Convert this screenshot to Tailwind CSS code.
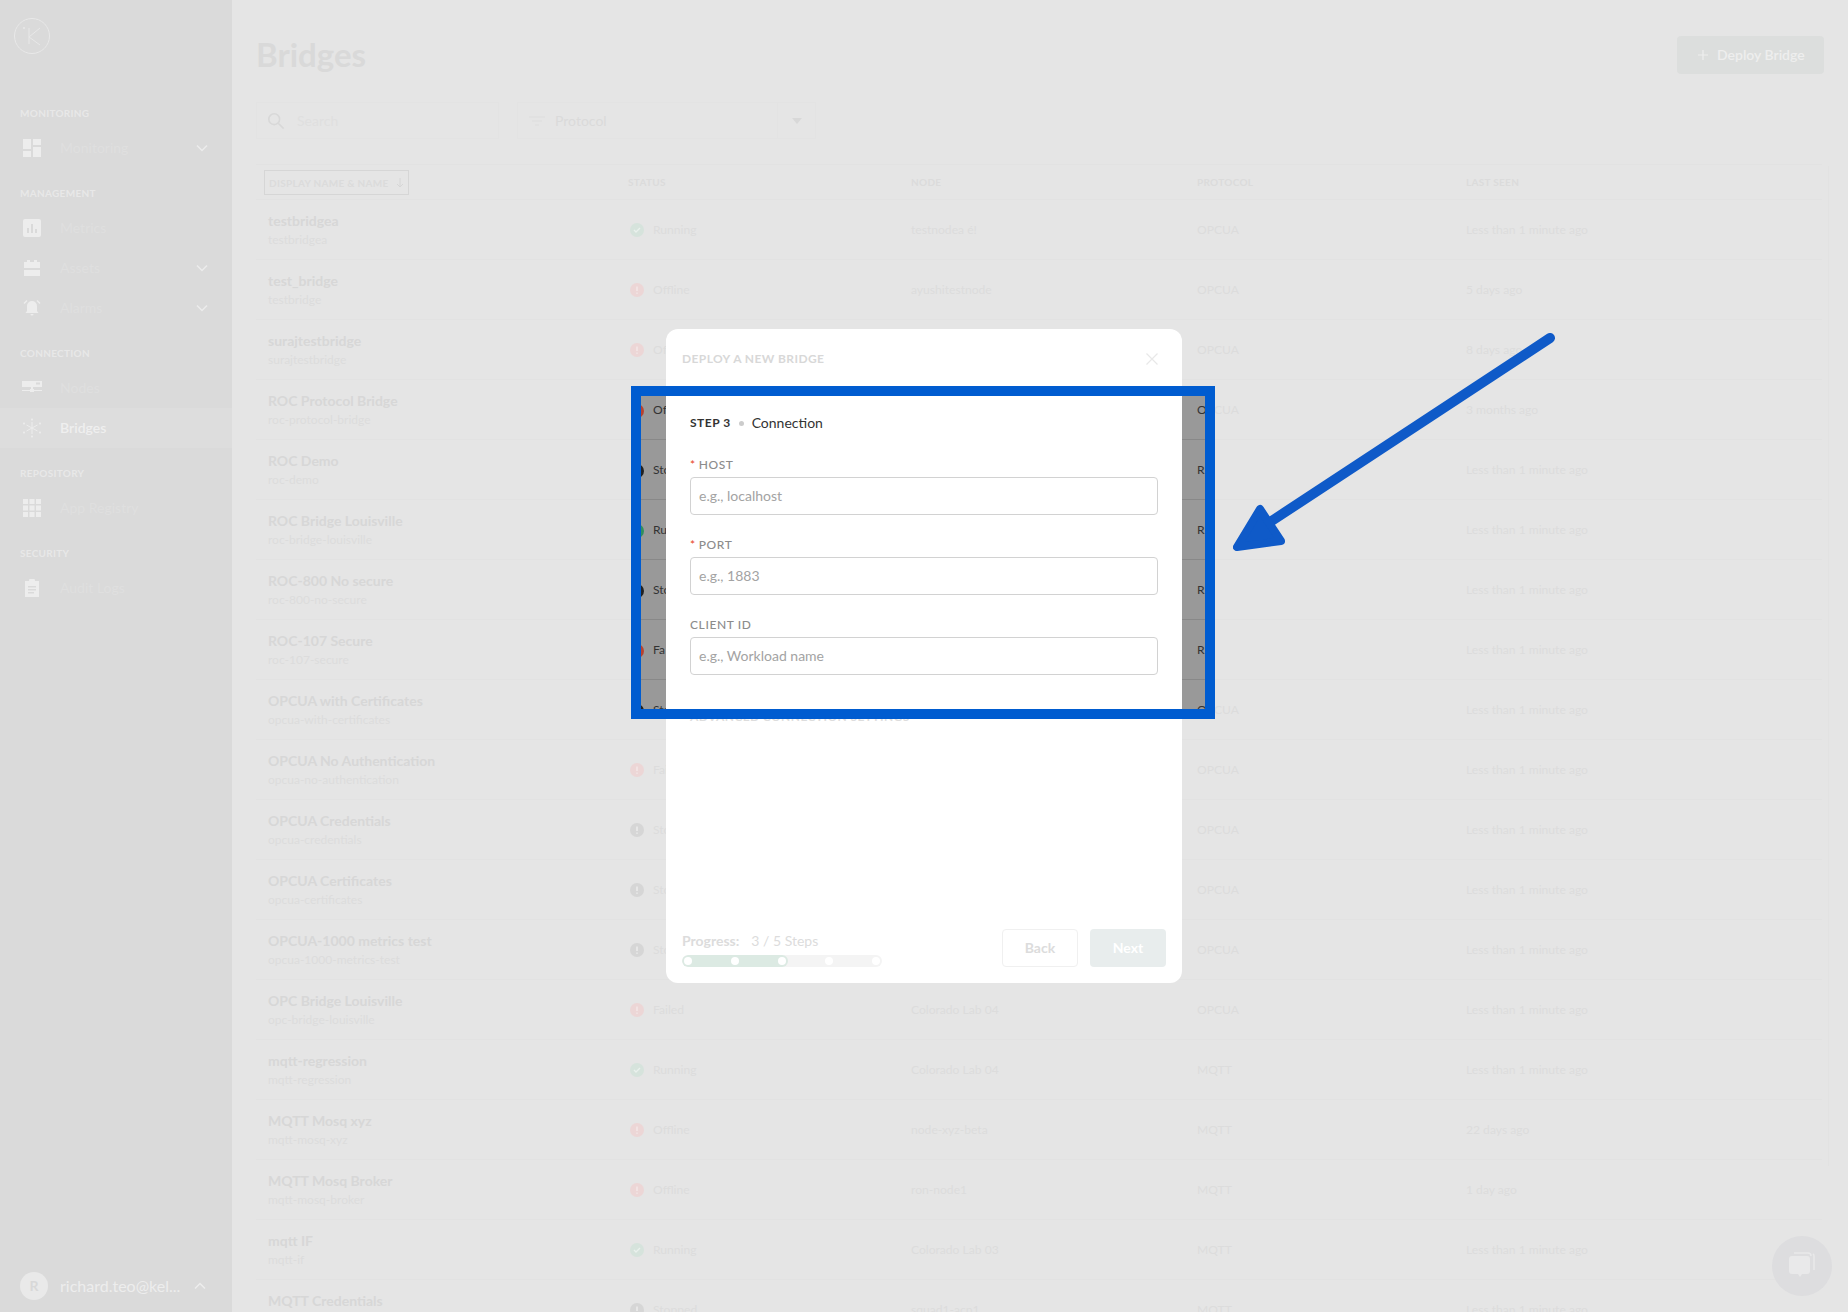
<!DOCTYPE html>
<html><head><meta charset="utf-8"><script src="https://cdn.jsdelivr.net/npm/@tailwindcss/browser@4"></script></head>
<body class="m-0 overflow-hidden">
<div class="relative w-[1848px] h-[1312px] overflow-hidden bg-[#e5e5e5] font-['Lato',sans-serif] flex">

<aside class="w-[232px] h-full bg-[#dadada] flex flex-col shrink-0">
  <div class="h-[103px] pl-[14px] pt-[18px] shrink-0">
    <svg width="36" height="36" viewBox="0 0 36 36" fill="none" stroke="#e8e8e8"><circle cx="18" cy="18" r="17.500"/><path d="M15 10v16M26 10l-11 9 11 8"/><circle cx="10" cy="10" r=".7" fill="#e8e8e8"/></svg>
  </div>
  <div class="flex flex-col gap-[15px] text-[#dfdfdf] text-sm">
    <section><h3 class="h-5 leading-5 pl-5 mb-[5px] text-[10px] font-bold tracking-[0.3px] text-[#e8e8e8]">MONITORING</h3>
      <div class="h-10 flex items-center"><span class="w-16 -mr-1 flex justify-center"><svg width="18" height="18" viewBox="0 0 18 18" fill="#ededed"><path d="M0 0h8v10H0zM10 0h8v6h-8zM10 8h8v10h-8zM0 12h8v6H0z"/></svg></span><span class="flex-1">Monitoring</span><svg class="mr-6" width="12" height="8" viewBox="0 0 12 8" fill="none" stroke="#ececec" stroke-width="1.500"><path d="M1 1.500l5 5 5-5"/></svg></div></section>
    <section><h3 class="h-5 leading-5 pl-5 mb-[5px] text-[10px] font-bold tracking-[0.3px] text-[#e8e8e8]">MANAGEMENT</h3>
      <div class="h-10 flex items-center"><span class="w-16 -mr-1 flex justify-center"><svg width="18" height="18" viewBox="0 0 18 18"><rect width="18" height="18" rx="2" fill="#ededed"/><path d="M4 9h2v5H4zM8 5h2v9H8zM12 10h2v4h-2z" fill="#dadada"/></svg></span><span class="flex-1">Metrics</span></div>
      <div class="h-10 flex items-center"><span class="w-16 -mr-1 flex justify-center"><svg width="18" height="18" viewBox="0 0 18 18" fill="#ededed"><path d="M1 3h3V1h3v2h4V1h3v2h3v6H1zM1 11h16v6H1z"/></svg></span><span class="flex-1">Assets</span><svg class="mr-6" width="12" height="8" viewBox="0 0 12 8" fill="none" stroke="#ececec" stroke-width="1.500"><path d="M1 1.500l5 5 5-5"/></svg></div>
      <div class="h-10 flex items-center"><span class="w-16 -mr-1 flex justify-center"><svg width="18" height="18" viewBox="0 0 18 18" fill="#ededed"><path d="M9 2a5 5 0 0 0-5 5v5l-1.500 2h13L14 12V7a5 5 0 0 0-5-5zM7.500 15h3a1.500 1.500 0 0 1-3 0zM3.500 1L0.500 4l1 1 3-3zM14.500 1l3 3-1 1-3-3z"/></svg></span><span class="flex-1">Alarms</span><svg class="mr-6" width="12" height="8" viewBox="0 0 12 8" fill="none" stroke="#ececec" stroke-width="1.500"><path d="M1 1.500l5 5 5-5"/></svg></div></section>
    <section><h3 class="h-5 leading-5 pl-5 mb-[5px] text-[10px] font-bold tracking-[0.3px] text-[#e8e8e8]">CONNECTION</h3>
      <div class="h-10 flex items-center"><span class="w-16 -mr-1 flex justify-center"><svg width="20" height="14" viewBox="0 0 20 14" fill="#ededed"><path d="M0 0h20v6H0zM0 9h8v1H0zM12 9h8v1h-8zM9 6h2v2h1v3H8V8h1z"/><rect x="14" y="1.500" width="4" height="2" fill="#dadada"/></svg></span><span>Nodes</span></div>
      <div class="h-10 flex items-center bg-[#dddddd] text-[#efefef] font-semibold"><span class="w-16 -mr-1 flex justify-center"><svg width="20" height="20" viewBox="0 0 20 20" fill="none" stroke="#ededed"><path d="M10 4v12M4.500 7l11 6M15.500 7l-11 6"/><g fill="#ededed" stroke="none"><circle cx="10" cy="1.500" r="1"/><circle cx="10" cy="18.500" r="1"/><circle cx="2" cy="5.500" r="1"/><circle cx="18" cy="5.500" r="1"/><circle cx="2" cy="14.500" r="1"/><circle cx="18" cy="14.500" r="1"/></g></svg></span><span>Bridges</span></div></section>
    <section><h3 class="h-5 leading-5 pl-5 mb-[5px] text-[10px] font-bold tracking-[0.3px] text-[#e8e8e8]">REPOSITORY</h3>
      <div class="h-10 flex items-center"><span class="w-16 -mr-1 flex justify-center"><svg width="18" height="18" viewBox="0 0 18 18" fill="#ededed"><path d="M0 0h5v5H0zM6.500 0h5v5h-5zM13 0h5v5h-5zM0 6.500h5v5H0zM6.500 6.500h5v5h-5zM13 6.500h5v5h-5zM0 13h5v5H0zM6.500 13h5v5h-5zM13 13h5v5h-5z"/></svg></span><span>App Registry</span></div></section>
    <section><h3 class="h-5 leading-5 pl-5 mb-[5px] text-[10px] font-bold tracking-[0.3px] text-[#e8e8e8]">SECURITY</h3>
      <div class="h-10 flex items-center"><span class="w-16 -mr-1 flex justify-center"><svg width="16" height="18" viewBox="0 0 16 18" fill="#ededed"><path fill-rule="evenodd" d="M1 2h4a3 3 0 0 1 6 0h4v16H1zM4 7v1.500h8V7zM4 10v1.500h8V10zM4 13v1.500h6V13z"/></svg></span><span>Audit Logs</span></div></section>
  </div>
  <div class="mt-auto h-[52px] flex items-center pl-5 text-[#ededed]">
    <span class="w-7 h-7 rounded-full bg-[#e9e9e9] text-[#d8d8d8] flex items-center justify-center text-sm font-bold mr-3">R</span>
    <span class="text-base w-[122px] whitespace-nowrap">richard.teo@kel...</span>
    <svg class="ml-3" width="12" height="8" viewBox="0 0 12 8" fill="none" stroke="#ededed" stroke-width="1.500"><path d="M1 6.500l5-5 5 5"/></svg>
  </div>
</aside>

<main class="flex-1 h-full pl-6 flex flex-col overflow-hidden">
  <header class="h-[102px] w-[1568px] flex justify-between shrink-0 pt-9">
    <h1 class="text-[33px] leading-[38px] -mt-px font-bold text-[#d9d9d9]">Bridges</h1>
    <button class="w-[147px] h-[38px] bg-[#dcdedd] rounded-sm text-[#eeeeee] text-sm font-semibold flex items-center pl-5 gap-2"><svg width="12" height="12" viewBox="0 0 12 12" stroke="#eeeeee" stroke-width="1.200"><path d="M6 1v10M1 6h10"/></svg>Deploy Bridge</button>
  </header>
  <div class="flex items-center h-[37px] shrink-0 text-sm text-[#dadada]">
    <div class="w-[243px] h-full border border-[#e3e3e3] flex items-center pl-[10px] gap-[12px]"><svg width="18" height="18" viewBox="0 0 20 20" fill="none" stroke="#d8d8d8" stroke-width="1.800"><circle cx="8" cy="8" r="6"/><path d="M12.500 12.500l6 6"/></svg><span class="text-[#dfdfdf]">Search</span></div>
    <div class="ml-[18px] w-[299px] h-full border border-[#e3e3e3] flex items-center pl-[11px]"><svg class="mr-[10px]" width="16" height="12" viewBox="0 0 16 12" stroke="#dedede" stroke-width="1.200"><path d="M0 2h16M3 6h10M6 10h4"/></svg><span class="flex-1">Protocol</span><span class="w-[38px] h-full border-l border-[#e3e3e3] flex items-center justify-center"><svg width="10" height="6" viewBox="0 0 10 6" fill="#d8d8d8"><path d="M0 0h10L5 6z"/></svg></span></div>
  </div>
  <div class="relative mt-[25px] w-[1566px] shrink-0 h-[36px] border-y border-[#e2e2e2] text-[10px] leading-[14px] font-bold tracking-[0.3px] text-[#dbdbdb] whitespace-nowrap">
    <div class="absolute left-[8px] top-[5px] w-[145px] h-[25px] border border-[#d6d6d6] flex items-center pl-1 gap-[7px]">DISPLAY NAME &amp; NAME<svg width="8" height="10" viewBox="0 0 8 10" fill="none" stroke="#d6d6d6"><path d="M4 0v9M1 6l3 3 3-3"/></svg></div>
    <span class="absolute left-[372px] top-[10px]">STATUS</span>
    <span class="absolute left-[655px] top-[10px]">NODE</span>
    <span class="absolute left-[941px] top-[10px]">PROTOCOL</span>
    <span class="absolute left-[1210px] top-[10px]">LAST SEEN</span>
  </div>
  <div class="w-[1566px] shrink-0 text-[#dcdcdc] text-[12.100px] [&>div]:h-[60px] [&>div]:pt-[2px] [&>div]:border-b [&>div]:border-[#e2e2e2] [&>div]:grid [&>div]:grid-cols-[374px_281px_286px_269px_1fr] [&>div]:items-center whitespace-nowrap">
    <div><div class="pl-3 pb-px"><div class="text-sm font-bold leading-5 text-[#d7d7d7]">testbridgea</div><div class="text-xs leading-[18px]">testbridgea</div></div><div class="flex items-center gap-[9px]"><svg width="14" height="14" viewBox="0 0 14 14"><circle cx="7" cy="7" r="7" fill="#d6e3dc"/><path d="M4 7l2 2 4-4" fill="none" stroke="#eaf1ed" stroke-width="1.300"/></svg>Running</div><div>testnodea é!</div><div>OPCUA</div><div>Less than 1 minute ago</div></div>
    <div><div class="pl-3 pb-px"><div class="text-sm font-bold leading-5 text-[#d7d7d7]">test_bridge</div><div class="text-xs leading-[18px]">testbridge</div></div><div class="flex items-center gap-[9px]"><svg width="14" height="14" viewBox="0 0 14 14"><circle cx="7" cy="7" r="7" fill="#ecd6d6"/><path d="M7 3.500v4.500M7 9.500v1.200" stroke="#f3e6e6" stroke-width="1.600"/></svg>Offline</div><div>ayushitestnode</div><div>OPCUA</div><div>5 days ago</div></div>
    <div><div class="pl-3 pb-px"><div class="text-sm font-bold leading-5 text-[#d7d7d7]">surajtestbridge</div><div class="text-xs leading-[18px]">surajtestbridge</div></div><div class="flex items-center gap-[9px]"><svg width="14" height="14" viewBox="0 0 14 14"><circle cx="7" cy="7" r="7" fill="#ecd6d6"/><path d="M7 3.500v4.500M7 9.500v1.200" stroke="#f3e6e6" stroke-width="1.600"/></svg>Offline</div><div></div><div>OPCUA</div><div>8 days ago</div></div>
    <div><div class="pl-3 pb-px"><div class="text-sm font-bold leading-5 text-[#d7d7d7]">ROC Protocol Bridge</div><div class="text-xs leading-[18px]">roc-protocol-bridge</div></div><div></div><div></div><div>OPCUA</div><div>3 months ago</div></div>
    <div><div class="pl-3 pb-px"><div class="text-sm font-bold leading-5 text-[#d7d7d7]">ROC Demo</div><div class="text-xs leading-[18px]">roc-demo</div></div><div></div><div></div><div></div><div>Less than 1 minute ago</div></div>
    <div><div class="pl-3 pb-px"><div class="text-sm font-bold leading-5 text-[#d7d7d7]">ROC Bridge Louisville</div><div class="text-xs leading-[18px]">roc-bridge-louisville</div></div><div></div><div></div><div></div><div>Less than 1 minute ago</div></div>
    <div><div class="pl-3 pb-px"><div class="text-sm font-bold leading-5 text-[#d7d7d7]">ROC-800 No secure</div><div class="text-xs leading-[18px]">roc-800-no-secure</div></div><div></div><div></div><div></div><div>Less than 1 minute ago</div></div>
    <div><div class="pl-3 pb-px"><div class="text-sm font-bold leading-5 text-[#d7d7d7]">ROC-107 Secure</div><div class="text-xs leading-[18px]">roc-107-secure</div></div><div></div><div></div><div></div><div>Less than 1 minute ago</div></div>
    <div><div class="pl-3 pb-px"><div class="text-sm font-bold leading-5 text-[#d7d7d7]">OPCUA with Certificates</div><div class="text-xs leading-[18px]">opcua-with-certificates</div></div><div></div><div></div><div>OPCUA</div><div>Less than 1 minute ago</div></div>
    <div><div class="pl-3 pb-px"><div class="text-sm font-bold leading-5 text-[#d7d7d7]">OPCUA No Authentication</div><div class="text-xs leading-[18px]">opcua-no-authentication</div></div><div class="flex items-center gap-[9px]"><svg width="14" height="14" viewBox="0 0 14 14"><circle cx="7" cy="7" r="7" fill="#ecd6d6"/><path d="M7 3.500v4.500M7 9.500v1.200" stroke="#f3e6e6" stroke-width="1.600"/></svg>Failed</div><div></div><div>OPCUA</div><div>Less than 1 minute ago</div></div>
    <div><div class="pl-3 pb-px"><div class="text-sm font-bold leading-5 text-[#d7d7d7]">OPCUA Credentials</div><div class="text-xs leading-[18px]">opcua-credentials</div></div><div class="flex items-center gap-[9px]"><svg width="14" height="14" viewBox="0 0 14 14"><circle cx="7" cy="7" r="7" fill="#d6d6d6"/><path d="M7 3.500v4.500M7 9.500v1.200" stroke="#ebebeb" stroke-width="1.600"/></svg>Stopped</div><div></div><div>OPCUA</div><div>Less than 1 minute ago</div></div>
    <div><div class="pl-3 pb-px"><div class="text-sm font-bold leading-5 text-[#d7d7d7]">OPCUA Certificates</div><div class="text-xs leading-[18px]">opcua-certificates</div></div><div class="flex items-center gap-[9px]"><svg width="14" height="14" viewBox="0 0 14 14"><circle cx="7" cy="7" r="7" fill="#d6d6d6"/><path d="M7 3.500v4.500M7 9.500v1.200" stroke="#ebebeb" stroke-width="1.600"/></svg>Stopped</div><div></div><div>OPCUA</div><div>Less than 1 minute ago</div></div>
    <div><div class="pl-3 pb-px"><div class="text-sm font-bold leading-5 text-[#d7d7d7]">OPCUA-1000 metrics test</div><div class="text-xs leading-[18px]">opcua-1000-metrics-test</div></div><div class="flex items-center gap-[9px]"><svg width="14" height="14" viewBox="0 0 14 14"><circle cx="7" cy="7" r="7" fill="#d6d6d6"/><path d="M7 3.500v4.500M7 9.500v1.200" stroke="#ebebeb" stroke-width="1.600"/></svg>Stopped</div><div></div><div>OPCUA</div><div>Less than 1 minute ago</div></div>
    <div><div class="pl-3 pb-px"><div class="text-sm font-bold leading-5 text-[#d7d7d7]">OPC Bridge Louisville</div><div class="text-xs leading-[18px]">opc-bridge-louisville</div></div><div class="flex items-center gap-[9px]"><svg width="14" height="14" viewBox="0 0 14 14"><circle cx="7" cy="7" r="7" fill="#ecd6d6"/><path d="M7 3.500v4.500M7 9.500v1.200" stroke="#f3e6e6" stroke-width="1.600"/></svg>Failed</div><div>Colorado Lab 04</div><div>OPCUA</div><div>Less than 1 minute ago</div></div>
    <div><div class="pl-3 pb-px"><div class="text-sm font-bold leading-5 text-[#d7d7d7]">mqtt-regression</div><div class="text-xs leading-[18px]">mqtt-regression</div></div><div class="flex items-center gap-[9px]"><svg width="14" height="14" viewBox="0 0 14 14"><circle cx="7" cy="7" r="7" fill="#d6e3dc"/><path d="M4 7l2 2 4-4" fill="none" stroke="#eaf1ed" stroke-width="1.300"/></svg>Running</div><div>Colorado Lab 04</div><div>MQTT</div><div>Less than 1 minute ago</div></div>
    <div><div class="pl-3 pb-px"><div class="text-sm font-bold leading-5 text-[#d7d7d7]">MQTT Mosq xyz</div><div class="text-xs leading-[18px]">mqtt-mosq-xyz</div></div><div class="flex items-center gap-[9px]"><svg width="14" height="14" viewBox="0 0 14 14"><circle cx="7" cy="7" r="7" fill="#ecd6d6"/><path d="M7 3.500v4.500M7 9.500v1.200" stroke="#f3e6e6" stroke-width="1.600"/></svg>Offline</div><div>node-xyz-beta</div><div>MQTT</div><div>22 days ago</div></div>
    <div><div class="pl-3 pb-px"><div class="text-sm font-bold leading-5 text-[#d7d7d7]">MQTT Mosq Broker</div><div class="text-xs leading-[18px]">mqtt-mosq-broker</div></div><div class="flex items-center gap-[9px]"><svg width="14" height="14" viewBox="0 0 14 14"><circle cx="7" cy="7" r="7" fill="#ecd6d6"/><path d="M7 3.500v4.500M7 9.500v1.200" stroke="#f3e6e6" stroke-width="1.600"/></svg>Offline</div><div>ron-node1</div><div>MQTT</div><div>1 day ago</div></div>
    <div><div class="pl-3 pb-px"><div class="text-sm font-bold leading-5 text-[#d7d7d7]">mqtt IF</div><div class="text-xs leading-[18px]">mqtt-if</div></div><div class="flex items-center gap-[9px]"><svg width="14" height="14" viewBox="0 0 14 14"><circle cx="7" cy="7" r="7" fill="#d6e3dc"/><path d="M4 7l2 2 4-4" fill="none" stroke="#eaf1ed" stroke-width="1.300"/></svg>Running</div><div>Colorado Lab 03</div><div>MQTT</div><div>Less than 1 minute ago</div></div>
    <div><div class="pl-3 pb-px"><div class="text-sm font-bold leading-5 text-[#d7d7d7]">MQTT Credentials</div><div class="text-xs leading-[18px]">mqtt-credentials</div></div><div class="flex items-center gap-[9px]"><svg width="14" height="14" viewBox="0 0 14 14"><circle cx="7" cy="7" r="7" fill="#d6d6d6"/><path d="M7 3.500v4.500M7 9.500v1.200" stroke="#ebebeb" stroke-width="1.600"/></svg>Stopped</div><div>squad1-acp1</div><div>MQTT</div><div>Less than 1 minute ago</div></div>
  </div>
</main>

<!-- faint outer edge of the table -->
<div class="absolute left-[1828px] top-[166px] h-[1000px] w-px bg-[#e2e2e2]"></div>

<!-- chat bubble -->
<div class="absolute left-[1772px] top-[1236px] w-[60px] h-[60px] rounded-full bg-[#dddddf] flex items-center justify-center">
  <svg width="30" height="32" viewBox="0 0 30 32"><path d="M7 3h14a3 3 0 0 1 3 3" fill="none" stroke="#e9e9ea" stroke-width="1.500"/><path d="M26 4a2 2 0 0 1 1 2v14" fill="none" stroke="#e9e9ea" stroke-width="1.500"/><path d="M5 6h15a3 3 0 0 1 3 3v12a3 3 0 0 1-3 3h-5l-2 3-2-3H5a3 3 0 0 1-3-3V9a3 3 0 0 1 3-3z" fill="#e9e9ea"/></svg>
</div>

<!-- modal -->
<div class="absolute left-[666px] top-[329px] w-[516px] h-[654px] bg-white rounded-xl">
  <div class="h-[60px] flex items-center justify-between pl-4 pr-6">
    <span class="text-xs font-bold tracking-[0.4px] text-[#d8d8d8]">DEPLOY A NEW BRIDGE</span>
    <svg width="12" height="12" viewBox="0 0 12 12" stroke="#e8e8e8" stroke-width="1.200"><path d="M.5.500l11 11M11.500.500l-11 11"/></svg>
  </div>
  <div class="absolute left-6 top-[380px] flex items-center gap-2 text-xs font-bold tracking-[0.4px] text-[#dddddd] whitespace-nowrap">ADVANCED CONNECTION SETTINGS<svg width="8" height="5" viewBox="0 0 8 5" fill="none" stroke="#dddddd"><path d="M.5.500L4 4 7.500.500"/></svg></div>
  <div class="absolute left-4 right-4 bottom-4 h-[38px] flex justify-between">
    <div class="w-[200px] flex flex-col">
      <div class="text-sm leading-[24px] text-[#dcdcdc] whitespace-nowrap"><b class="mr-[12px] font-bold">Progress:</b>3 / 5 Steps</div>
      <div class="relative mt-[2px] h-3 w-[200px] rounded-full bg-[#f4f4f4] overflow-hidden">
        <div class="absolute left-0 top-0 h-3 w-[106px] rounded-full bg-[#dceae3]"></div>
        <div class="absolute inset-0 flex items-center justify-between px-[2px]"><i class="w-2 h-2 rounded-full bg-white"></i><i class="w-2 h-2 rounded-full bg-white"></i><i class="w-2 h-2 rounded-full bg-white"></i><i class="w-2 h-2 rounded-full bg-white"></i><i class="w-2 h-2 rounded-full bg-white"></i></div>
      </div>
    </div>
    <div class="flex gap-3 text-sm font-bold">
      <button class="w-[76px] h-[38px] rounded-sm border border-[#f0f0f0] text-[#dcdcdc]">Back</button>
      <button class="w-[76px] h-[38px] rounded-sm bg-[#e8eded] text-white">Next</button>
    </div>
  </div>
</div>

<!-- annotation frame: shows the untouched page through -->
<div class="absolute left-[631px] top-[386px] w-[584px] h-[333px] border-[10px] border-[#005cd0] bg-[#999999] overflow-hidden">
  <div class="-mt-4 text-[12.100px] text-[#333333] whitespace-nowrap [&>div]:relative [&>div]:h-[60px] [&>div]:pt-[2px] [&>div]:border-b [&>div]:border-[#888888] [&>div]:flex [&>div]:items-center [&>div]:pl-3">
    <div><svg class="absolute -left-[11px]" width="14" height="14"><circle cx="7" cy="7" r="7" fill="#b8412e"/></svg><span>Of</span><span class="absolute left-[556px]">O</span></div>
    <div><svg class="absolute -left-[11px]" width="14" height="14"><circle cx="7" cy="7" r="7" fill="#222222"/></svg><span>Sto</span><span class="absolute left-[556px]">R</span></div>
    <div><svg class="absolute -left-[11px]" width="14" height="14"><circle cx="7" cy="7" r="7" fill="#2f8f5e"/></svg><span>Ru</span><span class="absolute left-[556px]">R</span></div>
    <div><svg class="absolute -left-[11px]" width="14" height="14"><circle cx="7" cy="7" r="7" fill="#222222"/></svg><span>Sto</span><span class="absolute left-[556px]">R</span></div>
    <div><svg class="absolute -left-[11px]" width="14" height="14"><circle cx="7" cy="7" r="7" fill="#b8412e"/></svg><span>Fa</span><span class="absolute left-[556px]">R</span></div>
    <div><svg class="absolute -left-[11px]" width="14" height="14"><circle cx="7" cy="7" r="7" fill="#222222"/></svg><span>Sto</span><span class="absolute left-[556px]">O</span></div>
  </div>
  <div class="absolute left-[25px] top-0 w-[516px] h-full bg-white pl-6 pr-6 pt-[17px]">
    <div class="flex items-center h-5 whitespace-nowrap text-[#333333]">
      <b class="text-xs font-bold tracking-[0.5px]">STEP 3</b><i class="w-[5px] h-[5px] rounded-full bg-[#cccccc] ml-[8px] mr-[8px]"></i><span class="text-sm">Connection</span>
    </div>
    <label class="block mt-[23px] h-[18px] leading-[18px] text-xs font-medium tracking-[0.6px] text-[#8c8c8c]"><span class="text-[#e8492a] mr-[3px]">*</span>HOST</label>
    <div class="h-[38px] mt-[3px] border border-[#d2d2d2] rounded-sm flex items-center pl-2 text-sm text-[#a3a3a3]">e.g., localhost</div>
    <label class="block mt-[21px] h-[18px] leading-[18px] text-xs font-medium tracking-[0.6px] text-[#8c8c8c]"><span class="text-[#e8492a] mr-[3px]">*</span>PORT</label>
    <div class="h-[38px] mt-[3px] border border-[#d2d2d2] rounded-sm flex items-center pl-2 text-sm text-[#a3a3a3]">e.g., 1883</div>
    <label class="block mt-[21px] h-[18px] leading-[18px] text-xs font-medium tracking-[0.6px] text-[#8c8c8c]">CLIENT ID</label>
    <div class="h-[38px] mt-[3px] border border-[#d2d2d2] rounded-sm flex items-center pl-2 text-sm text-[#a3a3a3]">e.g., Workload name</div>
  </div>
</div>

<!-- annotation arrow -->
<svg class="absolute left-0 top-0 pointer-events-none blur-[0.5px]" width="1848" height="1312" viewBox="0 0 1848 1312">
  <path d="M1550 338L1264 526" stroke="#0f5ac8" stroke-width="10" stroke-linecap="round"/>
  <path d="M1260 509L1237 547L1281 541Z" fill="#0f5ac8" stroke="#0f5ac8" stroke-width="8" stroke-linejoin="round"/>
</svg>
</div>
</body></html>
